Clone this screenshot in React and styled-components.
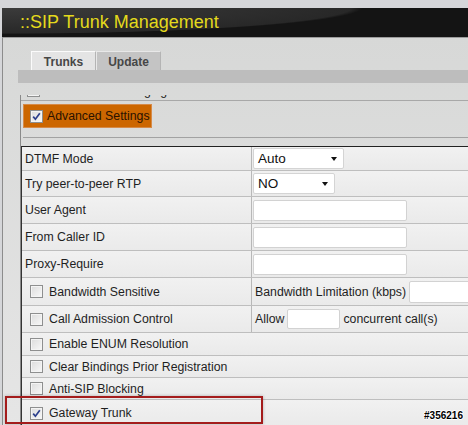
import React from "react";
import styled, { createGlobalStyle } from "styled-components";

const GlobalStyle = createGlobalStyle`
  html, body {
    margin: 0;
    padding: 0;
    background: #d5d6d9;
    font-family: "Liberation Sans", Arial, sans-serif;
  }
`;

const Page = styled.div`
  position: relative;
  width: 468px;
  height: 425px;
  overflow: hidden;
  padding: 8px 0 0 2px;
  box-sizing: border-box;
`;

const Header = styled.div`
  height: 29px;
  line-height: 29px;
  padding-left: 18px;
  font-size: 18px;
  color: #e4da1c;
  background:
    radial-gradient(361px 27px at 0 -1px, #3c3c3c 0%, #282828 97%, rgba(20,20,20,0) 100%),
    #141414;
`;

const Panel = styled.div`
  height: 400px;
  border-left: 1px solid #8c8c8c;
  border-top: 1px solid #9c9c9c;
  background: linear-gradient(#d7d8d7, #e6e6e6);
`;

const Tabs = styled.div`
  display: flex;
  margin-top: 13px;
  padding-left: 28px;
`;

const Tab = styled.div`
  width: 65px;
  height: 19px;
  line-height: 21px;
  text-align: center;
  font-size: 12px;
  font-weight: bold;
  color: #474747;
  box-sizing: border-box;
  background: ${(p) => (p.$active ? "#c4c4c4" : "#e4e4e4")};
  border-top: 1px solid ${(p) => (p.$active ? "#e8e8e8" : "#fbfbfb")};
  border-left: 1px solid ${(p) => (p.$active ? "#e8e8e8" : "#fbfbfb")};
  border-right: 1px solid #b4b4b4;
`;

const TabBar = styled.div`
  height: 13px;
  margin-left: 15px;
  background: #bdbdbd;
`;

const Content = styled.div`
  margin: 12px 0 0 17px;
  border-left: 1px solid #8a8a8a;
  height: 400px;
`;

/* bottom edge of the row scrolled out of view above */
const Stub = styled.div`
  height: 5px;
  overflow: hidden;
  border-bottom: 1px solid #a8a8a8;
`;

const StubRow = styled.div`
  display: flex;
  align-items: flex-end;
  gap: 3px;
  height: 15px;
  margin-top: -13px;
  padding-left: 6px;
  font-size: 12.3px;
  color: #222;
  line-height: 12px;
  white-space: nowrap;
`;

const Advanced = styled.div`
  display: flex;
  align-items: center;
  gap: 4px;
  width: 129px;
  height: 24px;
  margin: 3px 0 0 2px;
  padding-left: 6px;
  box-sizing: border-box;
  background: #cc6600;
  border: 1px solid #d68a48;
  font-size: 12.3px;
  color: #2a1200;
  white-space: nowrap;
`;

const Rule = styled.div`
  margin: 9px 0 0 2px;
  border-top: 1px solid #a2a2a2;
`;

const Table = styled.div`
  margin-top: 8px;
  border-top: 1px solid #222;
  border-left: 1px solid #333;
`;

const Row = styled.div`
  position: relative;
  display: grid;
  grid-template-columns: ${(p) => (p.$full ? "1fr" : "230px 1fr")};
  height: ${(p) => p.$h}px;
  border-bottom: ${(p) => (p.$last ? "none" : "1px solid #bebebe")};
  background: linear-gradient(#f1f1f1, #eaeaea);
  font-size: 12.3px;
  color: #1f1f1f;
`;

const Label = styled.div`
  display: flex;
  align-items: center;
  gap: 6px;
  padding-left: ${(p) => (p.$check ? 8 : 3)}px;
  border-right: ${(p) => (p.$full ? "none" : "1px solid #b8b8b8")};
  white-space: nowrap;
`;

const Value = styled.div`
  display: flex;
  align-items: center;
  gap: 3px;
  padding-left: ${(p) => p.$pad ?? 1}px;
  white-space: nowrap;
`;

const Select = styled.div`
  display: flex;
  align-items: center;
  justify-content: space-between;
  width: ${(p) => p.$w}px;
  height: 21px;
  box-sizing: border-box;
  padding: 0 6px 0 4px;
  background: #fff;
  border: 1px solid #d4d4d4;
  border-radius: 2px;
  font-size: 13.5px;
  color: #111;
`;

const Arrow = styled.span`
  width: 0;
  height: 0;
  border-left: 3px solid transparent;
  border-right: 3px solid transparent;
  border-top: 4px solid #111;
`;

const Input = styled.div`
  width: ${(p) => p.$w}px;
  height: ${(p) => p.$hgt ?? 21}px;
  box-sizing: border-box;
  background: #fff;
  border: 1px solid #d2d2d2;
  border-radius: 2px;
  flex-shrink: 0;
`;

const Box = styled.span`
  display: inline-flex;
  align-items: center;
  justify-content: center;
  width: 13px;
  height: 13px;
  box-sizing: border-box;
  flex-shrink: 0;
  border: 1px solid #8e8f8f;
  background: linear-gradient(135deg, #dcdcdc, #f8f8f8);
  box-shadow: inset 0 0 0 1px #f4f4f4;
`;

const Highlight = styled.div`
  position: absolute;
  left: -17px;
  top: -4px;
  width: 258px;
  height: 28px;
  box-sizing: border-box;
  border: 2px solid #a41c1c;
  box-shadow: 0 0 3px rgba(0, 0, 0, 0.25);
  pointer-events: none;
`;

const Stamp = styled.div`
  position: absolute;
  right: 5px;
  top: 410px;
  font-size: 10px;
  font-weight: bold;
  color: #000;
  text-shadow: 1px 0 0 #fff, -1px 0 0 #fff, 0 1px 0 #fff, 0 -1px 0 #fff;
`;

const Checkbox = ({ checked }) => (
  <Box>
    {checked && (
      <svg width="9" height="9" viewBox="0 0 9 9">
        <path d="M1.2 4.6 L3.4 7.2 L7.8 1.2" fill="none" stroke="#2c3f8c" strokeWidth="1.7" />
      </svg>
    )}
  </Box>
);

const textRows = [
  { label: "User Agent", h: 26 },
  { label: "From Caller ID", h: 26 },
  { label: "Proxy-Require", h: 26 },
];

const checkRows = [
  { label: "Enable ENUM Resolution", h: 22 },
  { label: "Clear Bindings Prior Registration", h: 21 },
  { label: "Anti-SIP Blocking", h: 21 },
];

const App = () => {
  return (
    <>
      <GlobalStyle />
      <Page>
        <Header>::SIP Trunk Management</Header>
        <Panel>
          <Tabs>
            <Tab>Trunks</Tab>
            <Tab $active>Update</Tab>
          </Tabs>
          <TabBar />
          <Content>
            <Stub>
              <StubRow>
                <Checkbox />
                <span>Enable SIP Messaging</span>
              </StubRow>
            </Stub>
            <Advanced>
              <Checkbox checked />
              <span>Advanced Settings</span>
            </Advanced>
            <Rule />
            <Table>
              <Row $h={23}>
                <Label>DTMF Mode</Label>
                <Value>
                  <Select $w={91}>
                    Auto <Arrow />
                  </Select>
                </Value>
              </Row>
              <Row $h={25}>
                <Label>Try peer-to-peer RTP</Label>
                <Value>
                  <Select $w={82}>
                    NO <Arrow />
                  </Select>
                </Value>
              </Row>
              {textRows.map((r) => (
                <Row key={r.label} $h={r.h}>
                  <Label>{r.label}</Label>
                  <Value>
                    <Input $w={154} />
                  </Value>
                </Row>
              ))}
              <Row $h={27}>
                <Label $check>
                  <Checkbox />
                  Bandwidth Sensitive
                </Label>
                <Value $pad={3}>
                  Bandwidth Limitation (kbps)
                  <Input $w={80} $hgt={22} />
                </Value>
              </Row>
              <Row $h={26}>
                <Label $check>
                  <Checkbox />
                  Call Admission Control
                </Label>
                <Value $pad={3}>
                  Allow
                  <Input $w={53} $hgt={20} />
                  concurrent call(s)
                </Value>
              </Row>
              {checkRows.map((r) => (
                <Row key={r.label} $h={r.h} $full>
                  <Label $check $full>
                    <Checkbox />
                    {r.label}
                  </Label>
                </Row>
              ))}
              <Row $h={26} $full $last>
                <Label $check $full>
                  <Checkbox checked />
                  Gateway Trunk
                </Label>
                <Highlight />
              </Row>
            </Table>
          </Content>
        </Panel>
        <Stamp>#356216</Stamp>
      </Page>
    </>
  );
};

export default App;
